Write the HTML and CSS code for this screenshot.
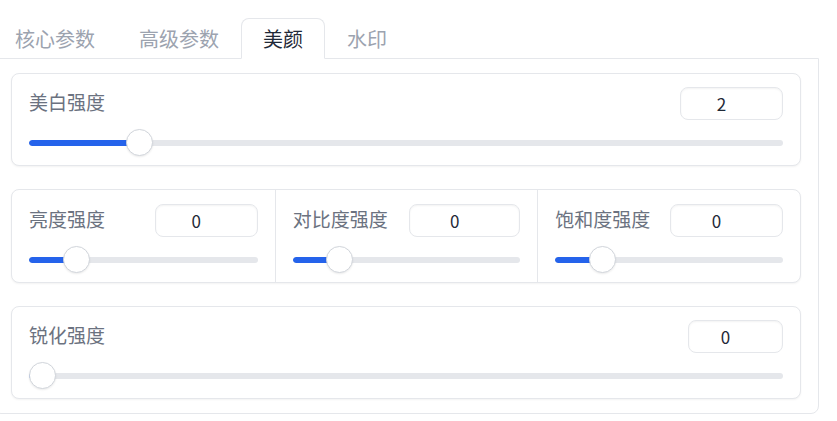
FILE: index.html
```html
<!DOCTYPE html>
<html lang="zh-CN">
<head>
<meta charset="utf-8">
<title>美颜</title>
<link rel="stylesheet" href="styles.css">
</head>
<body>
<div class="app">
  <div class="tabs">
    <button class="tab">核心参数</button>
    <button class="tab">高级参数</button>
    <button class="tab tab-active">美颜</button>
    <button class="tab">水印</button>
  </div>
  <div class="panel">
    <div class="card">
      <div class="field">
        <div class="field-head">
          <span class="label">美白强度</span>
          <div class="num num-w103">2</div>
        </div>
        <div class="slider" style="--p:0.1333">
          <div class="track"><div class="fill"></div></div>
          <div class="thumb"></div>
        </div>
      </div>
    </div>

    <div class="card card-row">
      <div class="field col">
        <div class="field-head">
          <span class="label">亮度强度</span>
          <div class="num num-w103">0</div>
        </div>
        <div class="slider" style="--p:0.1667">
          <div class="track"><div class="fill"></div></div>
          <div class="thumb"></div>
        </div>
      </div>
      <div class="field col col-sep">
        <div class="field-head">
          <span class="label">对比度强度</span>
          <div class="num num-w111">0</div>
        </div>
        <div class="slider" style="--p:0.1667">
          <div class="track"><div class="fill"></div></div>
          <div class="thumb"></div>
        </div>
      </div>
      <div class="field col col-sep">
        <div class="field-head">
          <span class="label">饱和度强度</span>
          <div class="num num-w113">0</div>
        </div>
        <div class="slider" style="--p:0.1667">
          <div class="track"><div class="fill"></div></div>
          <div class="thumb"></div>
        </div>
      </div>
    </div>

    <div class="card">
      <div class="field">
        <div class="field-head">
          <span class="label">锐化强度</span>
          <div class="num num-w95">0</div>
        </div>
        <div class="slider" style="--p:0">
          <div class="track"><div class="fill"></div></div>
          <div class="thumb"></div>
        </div>
      </div>
    </div>
  </div>
</div>
</body>
</html>
```

FILE: styles.css
```css
* { box-sizing: border-box; }

html, body {
  margin: 0;
  padding: 0;
  background: #ffffff;
}

body {
  font-family: "Noto Sans CJK SC", "Noto Sans", sans-serif;
  overflow: hidden;
}

.app {
  margin-left: -7px;
  width: 826px;
  padding-top: 18px;
}

.tabs {
  display: flex;
  height: 40px;
  position: relative;
  z-index: 1;
}

.tab {
  height: 41px;
  margin: 0 0 -1px 0;
  padding: 0 21px;
  border: 1px solid transparent;
  border-radius: 8px 8px 0 0;
  background: transparent;
  font-family: "Noto Sans CJK SC", sans-serif;
  font-size: 20px;
  line-height: 39px;
  color: #9ca3af;
  cursor: pointer;
}

.tab-active {
  background: #ffffff;
  border-color: #e5e7eb;
  border-bottom-color: #ffffff;
  color: #1f2937;
}

.panel {
  border: 1px solid #e5e7eb;
  border-radius: 0 0 8px 8px;
  padding: 14px 17px;
  display: flex;
  flex-direction: column;
  gap: 23px;
}

.card {
  border: 1px solid #e5e7eb;
  border-radius: 8px;
  background: #ffffff;
  box-shadow: 0 1px 2px rgba(0, 0, 0, 0.05);
  padding: 13px 17px 9px 17px;
}

.card-row {
  display: grid;
  grid-template-columns: 1fr 1fr 1fr;
  padding: 0;
}

.col {
  padding: 14px 17px 9px 17px;
}

.col-sep {
  border-left: 1px solid #e5e7eb;
}

.field-head {
  display: flex;
  justify-content: space-between;
  align-items: flex-start;
  height: 33px;
}

.label {
  font-size: 19px;
  line-height: 19px;
  padding-top: 5px;
  color: #6b7280;
  white-space: nowrap;
}

.num {
  height: 33px;
  border: 1px solid #e5e7eb;
  border-radius: 8px;
  box-shadow: inset 0 1px 2px rgba(0, 0, 0, 0.05);
  font-size: 17px;
  line-height: 31px;
  color: #1f2937;
  text-align: center;
  padding-right: 20px;
}

.num-w95 { width: 95px; }
.num-w103 { width: 103px; }
.num-w111 { width: 111px; }
.num-w113 { width: 113px; }

.slider {
  position: relative;
  height: 27px;
  margin-top: 9px;
  display: flex;
  align-items: center;
}

.track {
  width: 100%;
  height: 6px;
  border-radius: 3px;
  background: #e5e7eb;
  overflow: hidden;
}

.fill {
  height: 100%;
  width: calc(var(--p) * (100% - 27px) + 13.5px);
  background: #2563eb;
  border-radius: 3px;
}

.thumb {
  position: absolute;
  top: 0;
  left: calc(var(--p) * (100% - 27px));
  width: 27px;
  height: 27px;
  border-radius: 50%;
  background: #ffffff;
  border: 1px solid #d1d5db;
  box-shadow: 0 1px 2px rgba(0, 0, 0, 0.08);
}
```
